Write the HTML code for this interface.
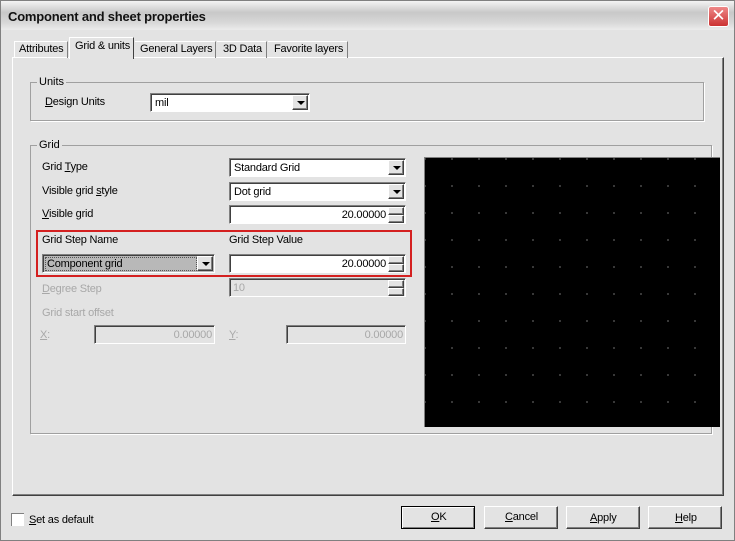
<!DOCTYPE html><html><head><style>
*{margin:0;padding:0;box-sizing:border-box}
body{width:735px;height:541px;background:#e3e3e3;font-family:"Liberation Sans",sans-serif;font-size:11px;color:#000;position:relative;overflow:hidden}
.a{position:absolute}
.t{position:absolute;white-space:nowrap;letter-spacing:-0.2px}
.in{position:absolute;background:#fff;border-top:1px solid #808080;border-left:1px solid #808080;border-bottom:1px solid #fff;border-right:1px solid #fff;box-shadow:inset 1px 1px 0 #404040;height:19px}
.dis{background:#e3e3e3}
.btn{position:absolute;background:#e3e3e3;border-top:1px solid #fff;border-left:1px solid #fff;border-right:1px solid #404040;border-bottom:1px solid #404040;box-shadow:inset -1px -1px 0 #808080}
.arr{position:absolute;right:1px;top:1px;width:16px;height:15px}
.arr:after{content:"";position:absolute;left:4px;top:5px;border-left:4px solid transparent;border-right:4px solid transparent;border-top:4px solid #000}
.grp{position:absolute;border:1px solid #a0a0a0;box-shadow:1px 1px 0 #fff}
.gl{position:absolute;background:#e3e3e3;padding:0 2px;top:-7px;left:6px}
.gray{color:#a8a8a8}
</style></head><body>
<div class="a" style="left:0;top:0;width:735px;height:541px;border:1px solid #808080"></div>
<div class="a" style="left:1px;top:1px;width:733px;height:29px;background:linear-gradient(#f4f4f4,#c8c8c8 40%,#d8d8d8 75%,#ececec)"></div>
<div class="t" style="left:8px;top:9px;font-size:13px;font-weight:bold;color:#111">Component and sheet properties</div>
<div class="a" style="left:708px;top:6px;width:21px;height:21px;background:linear-gradient(#e88,#c33);border:1px solid #fff;border-radius:3px;color:#fff;font-size:17px;line-height:18px;text-align:center">✕</div>
<div class="a" style="left:12px;top:57px;width:712px;height:439px;border-top:1px solid #fff;border-left:1px solid #fff;border-right:1px solid #404040;border-bottom:1px solid #404040;box-shadow:inset -1px -1px 0 #808080"></div>
<div class="a" style="left:14px;top:41px;width:54px;height:17px;border-top:1px solid #fff;border-left:1px solid #fff;border-right:1px solid #808080"></div>
<div class="t" style="left:19px;top:43px">Attributes</div>
<div class="a" style="left:69px;top:37px;width:65px;height:22px;background:#e3e3e3;border-top:1px solid #fff;border-left:1px solid #fff;border-right:1px solid #404040"></div>
<div class="t" style="left:75px;top:40px">Grid &amp; units</div>
<div class="a" style="left:135px;top:41px;width:81px;height:17px;border-top:1px solid #fff;border-right:1px solid #808080"></div>
<div class="t" style="left:140px;top:43px">General Layers</div>
<div class="a" style="left:217px;top:41px;width:50px;height:17px;border-top:1px solid #fff;border-right:1px solid #808080"></div>
<div class="t" style="left:223px;top:43px">3D Data</div>
<div class="a" style="left:268px;top:41px;width:80px;height:17px;border-top:1px solid #fff;border-right:1px solid #808080"></div>
<div class="t" style="left:274px;top:43px">Favorite layers</div>
<div class="grp" style="left:30px;top:82px;width:674px;height:39px"><span class="gl">Units</span></div>
<div class="t" style="left:45px;top:96px"><u>D</u>esign Units</div>
<div class="in" style="left:150px;top:93px;width:160px"><span class="t" style="left:4px;top:3px">mil</span><div class="btn arr"></div></div>
<div class="grp" style="left:30px;top:145px;width:682px;height:289px"><span class="gl">Grid</span></div>
<div class="t" style="left:42px;top:161px">Grid <u>T</u>ype</div>
<div class="in" style="left:229px;top:158px;width:177px"><span class="t" style="left:4px;top:3px">Standard Grid</span><div class="btn arr"></div></div>
<div class="t" style="left:42px;top:185px">Visible grid <u>s</u>tyle</div>
<div class="in" style="left:229px;top:182px;width:177px"><span class="t" style="left:4px;top:3px">Dot grid</span><div class="btn arr"></div></div>
<div class="t" style="left:42px;top:208px"><u>V</u>isible grid</div>
<div class="in" style="left:229px;top:205px;width:177px"><span class="t" style="right:19px;top:3px">20.00000</span><div class="btn" style="right:1px;top:1px;width:16px;height:8px"></div><div class="btn" style="right:1px;top:9px;width:16px;height:8px"></div></div>
<div class="a" style="left:36px;top:230px;width:376px;height:47px;border:2px solid #d42020"></div>
<div class="t" style="left:42px;top:234px">Grid Step Name</div>
<div class="t" style="left:229px;top:234px">Grid Step Value</div>
<div class="in" style="left:42px;top:254px;width:173px;background:#b8b8b8"><span class="t" style="left:3px;top:3px;outline:1px dotted #555;padding:0 1px;width:150px">Component grid</span><div class="btn arr"></div></div>
<div class="in" style="left:229px;top:254px;width:177px"><span class="t" style="right:19px;top:3px">20.00000</span><div class="btn" style="right:1px;top:1px;width:16px;height:8px"></div><div class="btn" style="right:1px;top:9px;width:16px;height:8px"></div></div>
<div class="t gray" style="left:42px;top:283px"><u>D</u>egree Step</div>
<div class="in dis" style="left:229px;top:278px;width:177px"><span class="t gray" style="left:3px;top:3px">10</span><div class="btn" style="right:1px;top:1px;width:16px;height:8px"></div><div class="btn" style="right:1px;top:9px;width:16px;height:8px"></div></div>
<div class="t gray" style="left:42px;top:307px">Grid start offset</div>
<div class="t gray" style="left:40px;top:329px"><u>X</u>:</div>
<div class="in dis" style="left:94px;top:325px;width:121px"><span class="t gray" style="right:2px;top:3px">0.00000</span></div>
<div class="t gray" style="left:229px;top:329px"><u>Y</u>:</div>
<div class="in dis" style="left:286px;top:325px;width:120px"><span class="t gray" style="right:2px;top:3px">0.00000</span></div>
<div class="a" style="left:424px;top:157px;width:296px;height:270px;background-color:#000;background-image:radial-gradient(circle,#555 0.7px,transparent 1.1px);background-size:27px 27px;background-position:13.5px 14.5px;border-left:1px solid #808080;border-top:1px solid #808080"></div>
<div class="a" style="left:11px;top:513px;width:13px;height:13px;background:#fff;border-top:1px solid #808080;border-left:1px solid #808080"></div>
<div class="t" style="left:29px;top:514px"><u>S</u>et as default</div>
<div class="btn" style="left:401px;top:506px;width:74px;height:23px;border:1px solid #000;box-shadow:inset 1px 1px 0 #fff,inset -1px -1px 0 #808080"></div><div class="t" style="left:431px;top:511px"><u>O</u>K</div>
<div class="btn" style="left:484px;top:506px;width:74px;height:23px"></div><div class="t" style="left:505px;top:511px"><u>C</u>ancel</div>
<div class="btn" style="left:566px;top:506px;width:74px;height:23px"></div><div class="t" style="left:590px;top:512px"><u>A</u>pply</div>
<div class="btn" style="left:648px;top:506px;width:74px;height:23px"></div><div class="t" style="left:675px;top:512px"><u>H</u>elp</div>
</body></html>
